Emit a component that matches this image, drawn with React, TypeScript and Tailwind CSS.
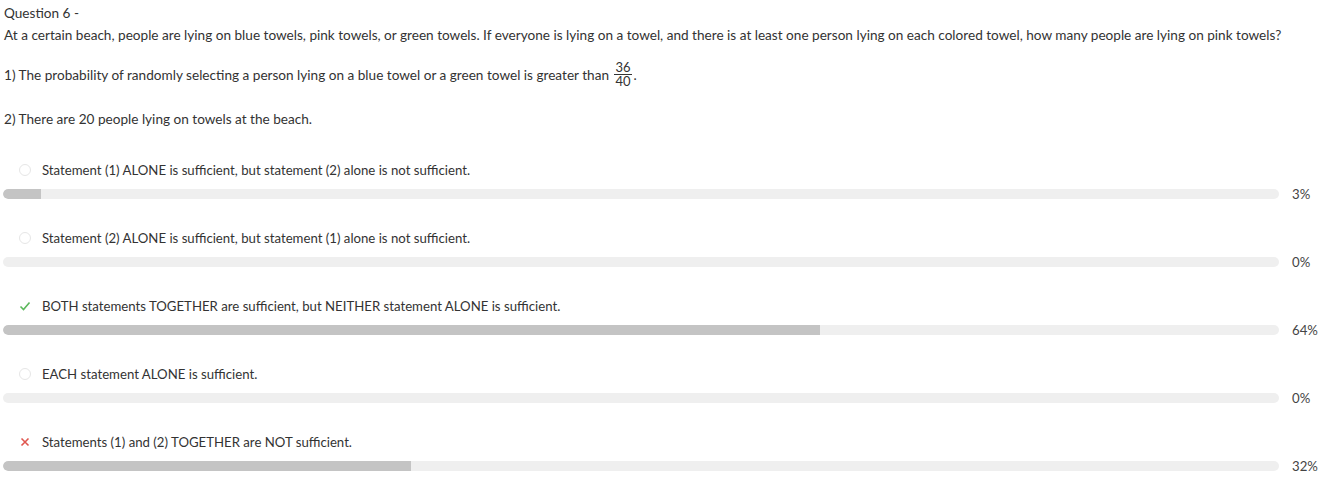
import React from "react";

type Opt = { text: string; pct: number; mark: "none" | "check" | "cross" };

const opts: Opt[] = [
  { text: "Statement (1) ALONE is sufficient, but statement (2) alone is not sufficient.", pct: 3, mark: "none" },
  { text: "Statement (2) ALONE is sufficient, but statement (1) alone is not sufficient.", pct: 0, mark: "none" },
  { text: "BOTH statements TOGETHER are sufficient, but NEITHER statement ALONE is sufficient.", pct: 64, mark: "check" },
  { text: "EACH statement ALONE is sufficient.", pct: 0, mark: "none" },
  { text: "Statements (1) and (2) TOGETHER are NOT sufficient.", pct: 32, mark: "cross" },
];

function Mark({ m }: { m: Opt["mark"] }) {
  if (m === "check")
    return (
      <svg width="12" height="12" viewBox="0 0 12 12" className="block">
        <path d="M1.5 6.5 L4.5 9.5 L10.5 2.5" fill="none" stroke="#5cb85c" strokeWidth="1.6" />
      </svg>
    );
  if (m === "cross")
    return (
      <svg width="10" height="10" viewBox="0 0 10 10" className="block">
        <path d="M1.5 1.5 L8.5 8.5 M8.5 1.5 L1.5 8.5" fill="none" stroke="#e0564f" strokeWidth="1.6" />
      </svg>
    );
  return <div className="w-[12px] h-[12px] rounded-full border border-[#e6e6e6]" />;
}

export default function App() {
  return (
    <div className="w-[1334px] bg-white text-[#333] text-[13.6px] leading-[20px] px-[4px] font-['Lato',sans-serif]">
      <div className="pt-[3px]">Question 6 -</div>
      <div className="mt-[2px]">
        At a certain beach, people are lying on blue towels, pink towels, or green towels. If everyone is lying on a towel, and there is at least one person lying on each colored towel, how many people are lying on pink towels?
      </div>
      <div className="mt-[16px] flex items-center">
        <span>1) The probability of randomly selecting a person lying on a blue towel or a green towel is greater than&nbsp;</span>
        <span className="inline-flex flex-col items-center text-[13px] leading-[13px] mx-[2px]">
          <span className="border-b border-[#333] px-[1px]">36</span>
          <span>40</span>
        </span>
        <span>.</span>
      </div>
      <div className="mt-[21px]">2) There are 20 people lying on towels at the beach.</div>
      <div className="mt-[31px] flex flex-col text-[13.2px]">
        {opts.map((o, i) => (
          <div key={i} className="flex flex-col mb-[24px]">
            <div className="flex items-center h-[20px]">
              <div className="w-[38px] flex justify-center pl-[4px]">
                <Mark m={o.mark} />
              </div>
              <span>{o.text}</span>
            </div>
            <div className="flex items-center mt-[4px] -ml-[1px]">
              <div className="w-[1276px] h-[10px] rounded-full bg-[#efefef] overflow-hidden">
                <div className="h-full bg-[#c4c4c4] rounded-l-full" style={{ width: `${o.pct}%` }} />
              </div>
              <span className="ml-[13px] text-[#444]">{o.pct}%</span>
            </div>
          </div>
        ))}
      </div>
    </div>
  );
}
